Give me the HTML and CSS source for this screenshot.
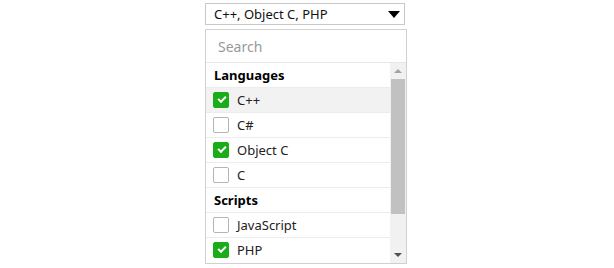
FILE: index.html
```html
<!DOCTYPE html>
<html>
<head>
<title>Multi Select</title>
<link rel="stylesheet" href="styles.css">
</head>
<body>
<div class="select">
<div class="select-button">
<span class="select-value">C++, Object C, PHP</span>
<span class="select-caret"></span>
</div>

<div class="select-panel">
<div class="search-row">
<input type="text" class="search-input" placeholder="Search">
</div>
<div class="list-wrap">
<div class="option-list">
<div class="group-title">Languages</div>
<label class="option hover"><span class="box checked"></span>C++</label>
<label class="option"><span class="box"></span>C#</label>
<label class="option"><span class="box checked"></span>Object C</label>
<label class="option"><span class="box"></span>C</label>
<div class="group-title">Scripts</div>
<label class="option"><span class="box"></span>JavaScript</label>
<label class="option last"><span class="box checked"></span>PHP</label>
</div>
<div class="scrollbar">
<div class="scroll-btn"><span class="arrow-up"></span></div>
<div class="scroll-track"><div class="scroll-thumb"></div></div>
<div class="scroll-btn"><span class="arrow-down"></span></div>
</div>
</div>
</div>
</div>
</body>
</html>
```

FILE: styles.css
```css
body {
font-family: "Noto Sans", "Open Sans", sans-serif;
margin: 0;
background: #fff;
color: #222;
}

.select {
width: 202px;
margin: 3px 0 0 205px;
}

.select-button {
width: 200px;
height: 22px;
box-sizing: border-box;
border: 1px solid #c9c9c9;
display: flex;
align-items: center;
justify-content: space-between;
padding: 0 4px 0 8px;
font-size: 13px;
color: #111;
}

.select-caret {
width: 0;
height: 0;
border-left: 6px solid transparent;
border-right: 6px solid transparent;
border-top: 7px solid #000;
margin-top: 1px;
}

.select-panel {
margin-top: 4px;
width: 202px;
box-sizing: border-box;
border: 1px solid #d0d0d0;
}

.search-row {
height: 32px;
border-bottom: 1px solid #e6e6e6;
display: flex;
align-items: center;
}

.search-input {
border: 0;
outline: none;
width: 100%;
padding: 0 12px;
font-family: inherit;
font-size: 14px;
color: #333;
}

.search-input::placeholder {
color: #999;
}

.list-wrap {
display: flex;
height: 200px;
}

.option-list {
flex: 1;
font-size: 13px;
}

.scrollbar {
width: 16px;
background: #f1f1f1;
display: flex;
flex-direction: column;
}

.scroll-btn {
height: 16px;
display: flex;
align-items: center;
justify-content: center;
}

.arrow-up {
border-left: 4px solid transparent;
border-right: 4px solid transparent;
border-bottom: 4px solid #a3a3a3;
}

.arrow-down {
border-left: 4px solid transparent;
border-right: 4px solid transparent;
border-top: 4px solid #505050;
}

.scroll-track {
flex: 1;
padding: 0 1px 0 1px;
}

.scroll-thumb {
height: 135px;
background: #c1c1c1;
}

.group-title {
height: 24px;
border-bottom: 1px solid #ececec;
display: flex;
align-items: center;
padding-left: 8px;
font-weight: bold;
color: #000;
}

.option {
height: 24px;
border-bottom: 1px solid #ececec;
display: flex;
align-items: center;
padding-left: 7px;
color: #222;
}

.option.last {
border-bottom: 0;
}

.option.hover {
background: #f2f2f2;
}

.box {
width: 16px;
height: 16px;
box-sizing: border-box;
border: 1px solid #b5b5b5;
border-radius: 2px;
background: #fff;
margin-right: 8px;
position: relative;
}

.box.checked {
background: #1aad19;
border-color: #1aad19;
}

.box.checked::after {
content: "";
position: absolute;
left: 4px;
top: 3px;
width: 6px;
height: 3px;
border-left: 2px solid #fff;
border-bottom: 2px solid #fff;
transform: rotate(-45deg);
}
```
